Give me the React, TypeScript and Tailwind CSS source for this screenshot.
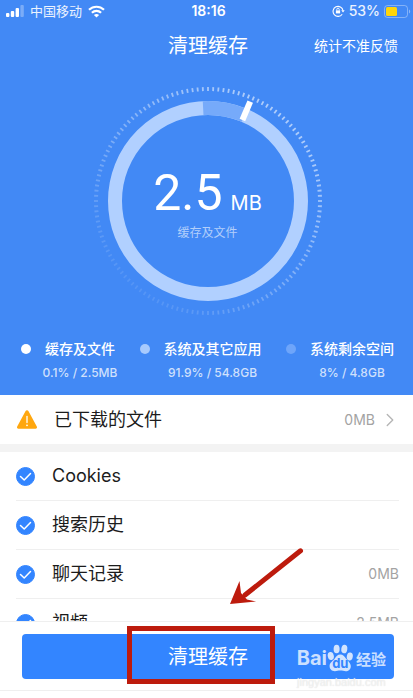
import { ChevronRight } from 'lucide-react'

interface CacheItem {
  id: string
  label: string
  size?: string
}

const usage = [
  { label: '缓存及文件', value: '0.1% / 2.5MB', dot: 'bg-white' },
  { label: '系统及其它应用', value: '91.9% / 54.8GB', dot: 'bg-[#a7cafd]' },
  { label: '系统剩余空间', value: '8% / 4.8GB', dot: 'bg-[#6ea5fa]' },
]

const items: CacheItem[] = [
  { id: 'cookies', label: 'Cookies' },
  { id: 'search', label: '搜索历史' },
  { id: 'chat', label: '聊天记录', size: '0MB' },
  { id: 'video', label: '视频', size: '2.5MB' },
]

const TICKS = 136

function polar(r: number, deg: number) {
  const a = (deg * Math.PI) / 180
  return { x: 116 + r * Math.sin(a), y: 116 - r * Math.cos(a) }
}

function StatusBar() {
  return (
    <div className="grid h-[22px] grid-cols-3 items-center pl-1.5 pr-0.5 text-[13px] leading-5">
      <div className="flex items-center gap-1.5 text-white/90">
        <svg width="18" height="12" viewBox="0 0 18 12" fill="#fff">
          <rect x="0" y="8" width="3.4" height="4" rx="1" />
          <rect x="4.8" y="6" width="3.4" height="6" rx="1" />
          <rect x="9.6" y="3" width="3.4" height="9" rx="1" />
          <rect x="14.4" y="0" width="3.4" height="12" rx="1" opacity="0.3" />
        </svg>
        <span>中国移动</span>
        <svg width="17" height="13" viewBox="0 0 17 13" fill="none" stroke="#fff" strokeWidth="2.2">
          <path d="M1 4.8C5.2.7 11.8.7 16 4.8" />
          <path d="M3.9 7.8c2.6-2.5 6.6-2.5 9.2 0" />
          <path d="M8.5 12.6 5.9 10c1.5-1.3 3.7-1.3 5.2 0z" fill="#fff" stroke="none" />
        </svg>
      </div>
      <div className="text-center text-sm font-semibold leading-5">18:16</div>
      <div className="flex items-center justify-end gap-1">
        <svg width="13" height="12" viewBox="0 0 13 12" fill="none" stroke="#fff">
          <path d="M10.2 9.2A5 5 0 1 1 11 5.5" strokeWidth="1.1" />
          <path d="M9.3 5.3h3.4L11 7.6z" fill="#fff" stroke="none" />
          <rect x="3.9" y="5.4" width="4.2" height="3" fill="#fff" stroke="none" />
          <path d="M4.8 5.5V4.4a1.2 1.2 0 0 1 2.4 0v1.1" strokeWidth="0.9" />
        </svg>
        <span className="text-sm font-medium leading-5 text-white/90">53%</span>
        <svg width="27" height="13" viewBox="0 0 27 13">
          <rect x="0.5" y="0.5" width="23" height="12" rx="3" fill="none" stroke="#fff" strokeOpacity="0.35" />
          <path d="M25 4.5c1.6.6 1.6 3.4 0 4z" fill="#fff" opacity="0.4" />
          <rect x="2" y="2" width="11" height="9" rx="1.5" fill="#ffd60a" />
        </svg>
      </div>
    </div>
  )
}

function UsageRing() {
  const from = polar(93, -3)
  const to = polar(93, 23)
  const markIn = polar(88, 23)
  const markOut = polar(108, 23)

  return (
    <div className="flex justify-center pl-0.5 pt-[15px]">
      <div className="relative h-[232px] w-[232px]">
        <svg width="232" height="232" viewBox="0 0 232 232" fill="none">
          {Array.from({ length: TICKS }, (_, i) => {
            const deg = (i * 360) / TICKS
            const a = polar(110, deg)
            const b = polar(114, deg)
            // brightest at the upper right, fading out towards the lower left
            const opacity = 0.34 + 0.24 * Math.cos(((deg - 40) * Math.PI) / 180)
            return <line key={i} x1={a.x} y1={a.y} x2={b.x} y2={b.y} stroke="#fff" strokeWidth="1.8" opacity={opacity} />
          })}
          <circle cx="116" cy="116" r="93" stroke="#b1d0ff" strokeWidth="14" />
          <path d={`M${from.x} ${from.y}A93 93 0 0 1 ${to.x} ${to.y}`} stroke="#76aafa" strokeWidth="14" />
          <line x1={markIn.x} y1={markIn.y} x2={markOut.x} y2={markOut.y} stroke="#fff" strokeWidth="6" />
        </svg>
        <div className="absolute inset-0 flex flex-col items-center pt-[78px]">
          <div className="flex items-baseline gap-2">
            <span className="font-['Roboto','Liberation_Sans',sans-serif] text-[50px] leading-[60px]">2.5</span>
            <span className="text-xl">MB</span>
          </div>
          <span className="mt-0.5 text-xs leading-4 text-white/60">缓存及文件</span>
        </div>
      </div>
    </div>
  )
}

function WarningIcon() {
  return (
    <svg width="22" height="19" viewBox="0 0 22 19">
      <path d="M9.6 1c.6-1 2.2-1 2.8 0l8.4 15.6c.6 1-.1 2.1-1.2 2.1H2.4c-1.1 0-1.8-1.1-1.2-2.1z" fill="#ffa70f" />
      <path d="M11 6.5v6" stroke="#fff" strokeWidth="1.3" strokeLinecap="round" />
      <circle cx="11" cy="15.3" r="0.9" fill="#fff" />
    </svg>
  )
}

function CacheRow({ item }: { item: CacheItem }) {
  return (
    <li className="ml-4 mr-3.5 flex h-[49px] items-center border-b border-[#efefef]">
      <span className="grid">
        <input
          id={item.id}
          type="checkbox"
          defaultChecked
          className="peer col-start-1 row-start-1 size-[19px] appearance-none rounded-full border border-gray-300 checked:border-[#3385ff] checked:bg-[#3385ff]"
        />
        <svg
          className="pointer-events-none invisible col-start-1 row-start-1 peer-checked:visible"
          width="19"
          height="19"
          viewBox="0 0 19 19"
          fill="none"
        >
          <path d="m4.5 9.5 3.7 3.5 6.3-6.5" stroke="#fff" strokeWidth="1.5" strokeLinecap="round" strokeLinejoin="round" />
        </svg>
      </span>
      <label htmlFor={item.id} className="ml-[17px] flex-1 text-lg leading-6 text-[#1c1c1c]">
        {item.label}
      </label>
      {item.size && <span className="text-sm text-[#a3a3a3]">{item.size}</span>}
    </li>
  )
}

function Watermark() {
  return (
    <div className="pointer-events-none absolute right-2 top-2.5 text-white">
      <div className="flex items-end text-white/75">
        <span className="text-xl font-bold leading-7">Bai</span>
        <svg width="27" height="28" viewBox="0 0 27 28" fill="#fff" fillOpacity="0.78">
          <ellipse cx="3.8" cy="12" rx="3" ry="4" transform="rotate(-14 3.8 12)" />
          <ellipse cx="9.6" cy="5" rx="3" ry="4.3" />
          <ellipse cx="17.3" cy="5" rx="3" ry="4.3" transform="rotate(8 17.3 5)" />
          <ellipse cx="22.8" cy="12.5" rx="3" ry="4" transform="rotate(10 22.8 12.5)" />
          <path d="M13.3 10.5c2.7 0 4.2 2.1 5.6 4 1.7 2.3 4.9 4.4 4.9 7.7 0 3.2-2.5 5-5 5-1.9 0-3.4-.6-5.5-.6s-3.6.6-5.4.6c-3 0-5.3-2-5.3-5.2 0-3.4 3.4-5 5.2-7.5 1.4-2 2.8-4 5.5-4z" />
          <text x="13.3" y="24" textAnchor="middle" fontSize="13" fontWeight="700" fill="#3385ff" fillOpacity="1">
            du
          </text>
        </svg>
        <span className="ml-0.5 text-[15px] font-bold leading-6">经验</span>
      </div>
      <div className="mt-1 text-center font-['Liberation_Sans',sans-serif] text-[11px] leading-3 text-white/60 [text-shadow:0_0_1px_#d4d4d4]">
        jingyan.baidu.com
      </div>
    </div>
  )
}

export default function App() {
  return (
    <div className="flex h-screen flex-col overflow-hidden bg-white font-['Inter','Noto_Sans_CJK_SC',sans-serif]">
      <header className="shrink-0 bg-[#4289f5] pb-3 text-white">
        <StatusBar />
        <div className="grid h-12 grid-cols-[1fr_auto_1fr] items-center pl-[18px] pr-[15px]">
          <h1 className="col-start-2 text-xl">清理缓存</h1>
          <a href="#feedback" className="justify-self-end text-sm">
            统计不准反馈
          </a>
        </div>
        <UsageRing />
        <ul className="mt-5 flex justify-between pl-[21px] pr-[19px]">
          {usage.map(u => (
            <li key={u.label} className="grid grid-cols-[auto_auto] items-center gap-x-3.5 gap-y-0.5">
              <span className={'size-2.5 rounded-full ' + u.dot} />
              <span className="text-sm font-medium leading-6">{u.label}</span>
              <span className="col-start-2 -mx-1 justify-self-center whitespace-nowrap text-xs font-medium leading-5 text-white/75">
                {u.value}
              </span>
            </li>
          ))}
        </ul>
      </header>

      <button type="button" className="flex h-[49px] shrink-0 items-center pl-4 pr-3 text-left">
        <WarningIcon />
        <span className="ml-4 flex-1 text-lg leading-6 text-[#1c1c1c]">已下载的文件</span>
        <span className="text-sm text-[#a3a3a3]">0MB</span>
        <ChevronRight size={22} strokeWidth={1.5} className="ml-1 text-[#b5b5b5]" />
      </button>

      <ul className="min-h-0 flex-1 overflow-hidden border-t-8 border-[#f3f3f3]">
        {items.map(item => (
          <CacheRow key={item.id} item={item} />
        ))}
      </ul>

      <footer className="relative mb-[7px] shrink-0 border-y border-[#efefef] pb-[11px] pl-[22px] pr-[19px] pt-3">
        <svg className="pointer-events-none absolute bottom-full left-[228px] mb-4" width="76" height="58" viewBox="0 0 76 58">
          <path d="M72.5 2.8 17 47" stroke="#bd1b0d" strokeWidth="5" strokeLinecap="round" />
          <path d="M2 56 11.5 33 13 45l6 6.5L28 53.5z" fill="#bd1b0d" />
        </svg>
        <div className="relative">
          <button type="button" className="h-[45px] w-full rounded bg-[#3385ff] text-xl text-white">
            清理缓存
          </button>
          <div className="pointer-events-none absolute -top-2 left-[105px] h-[58px] w-[148px] border-5 border-[#bd1b0d]" />
          <Watermark />
        </div>
      </footer>
    </div>
  )
}
